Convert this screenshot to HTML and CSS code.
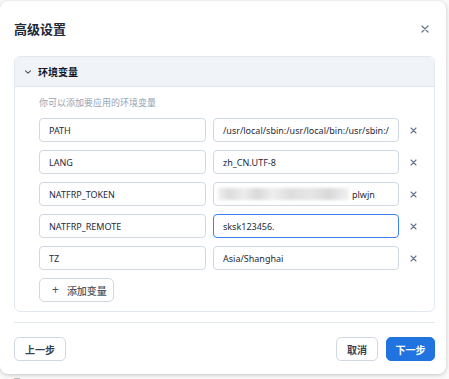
FILE: index.html
```html
<!DOCTYPE html>
<html lang="zh-CN">
<head>
  <meta charset="UTF-8">
  <title>高级设置</title>
  <link rel="stylesheet" href="styles.css">
</head>
<body>
<div class="modal">
  <header class="modal-head">
    <h1>高级设置</h1>
    <button class="icon-btn close" aria-label="关闭">
      <svg width="8" height="8" viewBox="0 0 8 8"><path d="M1 1L7 7M7 1L1 7" stroke="currentColor" stroke-width="1.2" stroke-linecap="round"/></svg>
    </button>
  </header>

  <section class="panel">
    <div class="panel-head">
      <svg class="chevron" width="8" height="6" viewBox="0 0 8 6"><path d="M1.5 1.8L4 4.2L6.5 1.8" fill="none" stroke="currentColor" stroke-width="1.1" stroke-linecap="round" stroke-linejoin="round"/></svg>
      <span>环境变量</span>
    </div>
    <div class="panel-body">
      <p class="hint">你可以添加要应用的环境变量</p>
      <div class="env-list">
        <div class="env-row">
          <input class="field key" value="PATH">
          <input class="field val" value="/usr/local/sbin:/usr/local/bin:/usr/sbin:/usr/bin:/sbin:/bin">
          <button class="icon-btn remove" aria-label="删除"><svg width="7" height="7" viewBox="0 0 7 7"><path d="M1 1L6 6M6 1L1 6" stroke="currentColor" stroke-width="1.1" stroke-linecap="round"/></svg></button>
        </div>
        <div class="env-row">
          <input class="field key" value="LANG">
          <input class="field val" value="zh_CN.UTF-8">
          <button class="icon-btn remove" aria-label="删除"><svg width="7" height="7" viewBox="0 0 7 7"><path d="M1 1L6 6M6 1L1 6" stroke="currentColor" stroke-width="1.1" stroke-linecap="round"/></svg></button>
        </div>
        <div class="env-row">
          <input class="field key" value="NATFRP_TOKEN">
          <div class="field val secret">
            <span class="smudge"></span>
            <span>plwjn</span>
          </div>
          <button class="icon-btn remove" aria-label="删除"><svg width="7" height="7" viewBox="0 0 7 7"><path d="M1 1L6 6M6 1L1 6" stroke="currentColor" stroke-width="1.1" stroke-linecap="round"/></svg></button>
        </div>
        <div class="env-row">
          <input class="field key" value="NATFRP_REMOTE">
          <input class="field val focus" value="sksk123456.">
          <button class="icon-btn remove" aria-label="删除"><svg width="7" height="7" viewBox="0 0 7 7"><path d="M1 1L6 6M6 1L1 6" stroke="currentColor" stroke-width="1.1" stroke-linecap="round"/></svg></button>
        </div>
        <div class="env-row">
          <input class="field key" value="TZ">
          <input class="field val" value="Asia/Shanghai">
          <button class="icon-btn remove" aria-label="删除"><svg width="7" height="7" viewBox="0 0 7 7"><path d="M1 1L6 6M6 1L1 6" stroke="currentColor" stroke-width="1.1" stroke-linecap="round"/></svg></button>
        </div>
      </div>
      <button class="btn add"><span class="plus">+</span>添加变量</button>
    </div>
  </section>

  <footer class="modal-foot">
    <button class="btn prev">上一步</button>
    <div class="foot-right">
      <button class="btn cancel">取消</button>
      <button class="btn primary">下一步</button>
    </div>
  </footer>
</div>
<div class="behind">1 项</div>
</body>
</html>
```

FILE: styles.css
```css
:root {
  --primary: #2174e0;
  --border: #cfd8e3;
  --line: #e2e8f0;
  --text: #1f2937;
  --muted: #94a3b8;
}
body {
  margin: 0;
  background: #fafafa;
  font-family: "Noto Sans", "Noto Sans CJK SC", sans-serif;
  color: var(--text);
  overflow: hidden;
}
.modal {
  width: 446px;
  margin-top: 1px;
  box-sizing: border-box;
  padding: 0 11px 13px 14px;
  background: white;
  border-radius: 8px;
  box-shadow: 0 1px 4px rgba(0,0,0,0.22);
}
.modal-head {
  height: 55px;
  display: flex;
  align-items: center;
  justify-content: space-between;
}
.modal-head h1 {
  margin: 0;
  font-size: 13px;
  font-weight: bold;
  color: #1e293b;
}
.icon-btn {
  border: none;
  background: none;
  padding: 0;
  display: flex;
  align-items: center;
  justify-content: center;
  color: #64748b;
  cursor: pointer;
}
.close {
  width: 20px;
  height: 20px;
}
.panel {
  border: 1px solid var(--line);
  border-radius: 6px;
}
.panel-head {
  height: 29px;
  display: flex;
  align-items: center;
  gap: 6px;
  padding-left: 9px;
  background: #f0f4f9;
  border-bottom: 1px solid var(--line);
  border-radius: 6px 6px 0 0;
  font-size: 10px;
  font-weight: 600;
  color: #111827;
}
.chevron {
  color: #475569;
}
.panel-body {
  padding: 9px 0 9px 24px;
}
.hint {
  margin: 0 0 8px;
  font-size: 9px;
  line-height: 14px;
  color: var(--muted);
}
.env-list {
  display: flex;
  flex-direction: column;
  gap: 8px;
}
.env-row {
  display: flex;
  gap: 7px;
  height: 24px;
}
.field {
  box-sizing: border-box;
  height: 24px;
  margin: 0;
  padding: 0 9px;
  border: 1px solid var(--border);
  border-radius: 4px;
  font-family: "Noto Sans", "Noto Sans CJK SC", sans-serif;
  font-size: 9px;
  color: #1f2937;
  background: white;
  outline: none;
}
.key { width: 167px; }
.val { width: 186px; }
.field.focus {
  border-color: #3b82f6;
}
.secret {
  display: flex;
  align-items: center;
  padding-left: 4px;
}
.smudge {
  width: 131px;
  height: 12px;
  margin-right: 3px;
  background: linear-gradient(90deg, #f0f0f0 0, #dcdcdc 8%, #ececec 20%, #d9d9d9 30%, #eeeeee 42%, #dddddd 55%, #e6e6e6 70%, #d8d8d8 85%, #f2f2f2 100%);
  filter: blur(1.5px);
}
.remove {
  width: 28px;
  height: 24px;
  margin-left: -7px;
}
.btn {
  box-sizing: border-box;
  height: 24px;
  padding: 0;
  border: 1px solid var(--border);
  border-radius: 5px;
  background: white;
  font-family: "Noto Sans", "Noto Sans CJK SC", sans-serif;
  font-size: 10px;
  font-weight: 600;
  color: #374151;
  cursor: pointer;
}
.prev { width: 52px; }
.cancel { width: 42px; }
.add {
  margin-top: 8px;
  width: 75px;
  display: flex;
  align-items: center;
  padding: 0 0 0 12px;
  font-weight: 500;
  color: #4b5563;
}
.plus {
  font-size: 12px;
  font-weight: 400;
  margin-right: 8px;
  line-height: 1;
}
.modal-foot {
  margin-top: 10px;
  padding-top: 14px;
  border-top: 1px solid var(--line);
  display: flex;
  justify-content: space-between;
}
.foot-right {
  display: flex;
  gap: 8px;
}
.btn.primary {
  width: 49px;
  background: var(--primary);
  border-color: var(--primary);
  color: white;
}
.behind {
  margin-top: 1px;
  padding-left: 2px;
  font-family: "Noto Sans", "Noto Sans CJK SC", sans-serif;
  font-size: 10px;
  color: #aaa;
}
```
